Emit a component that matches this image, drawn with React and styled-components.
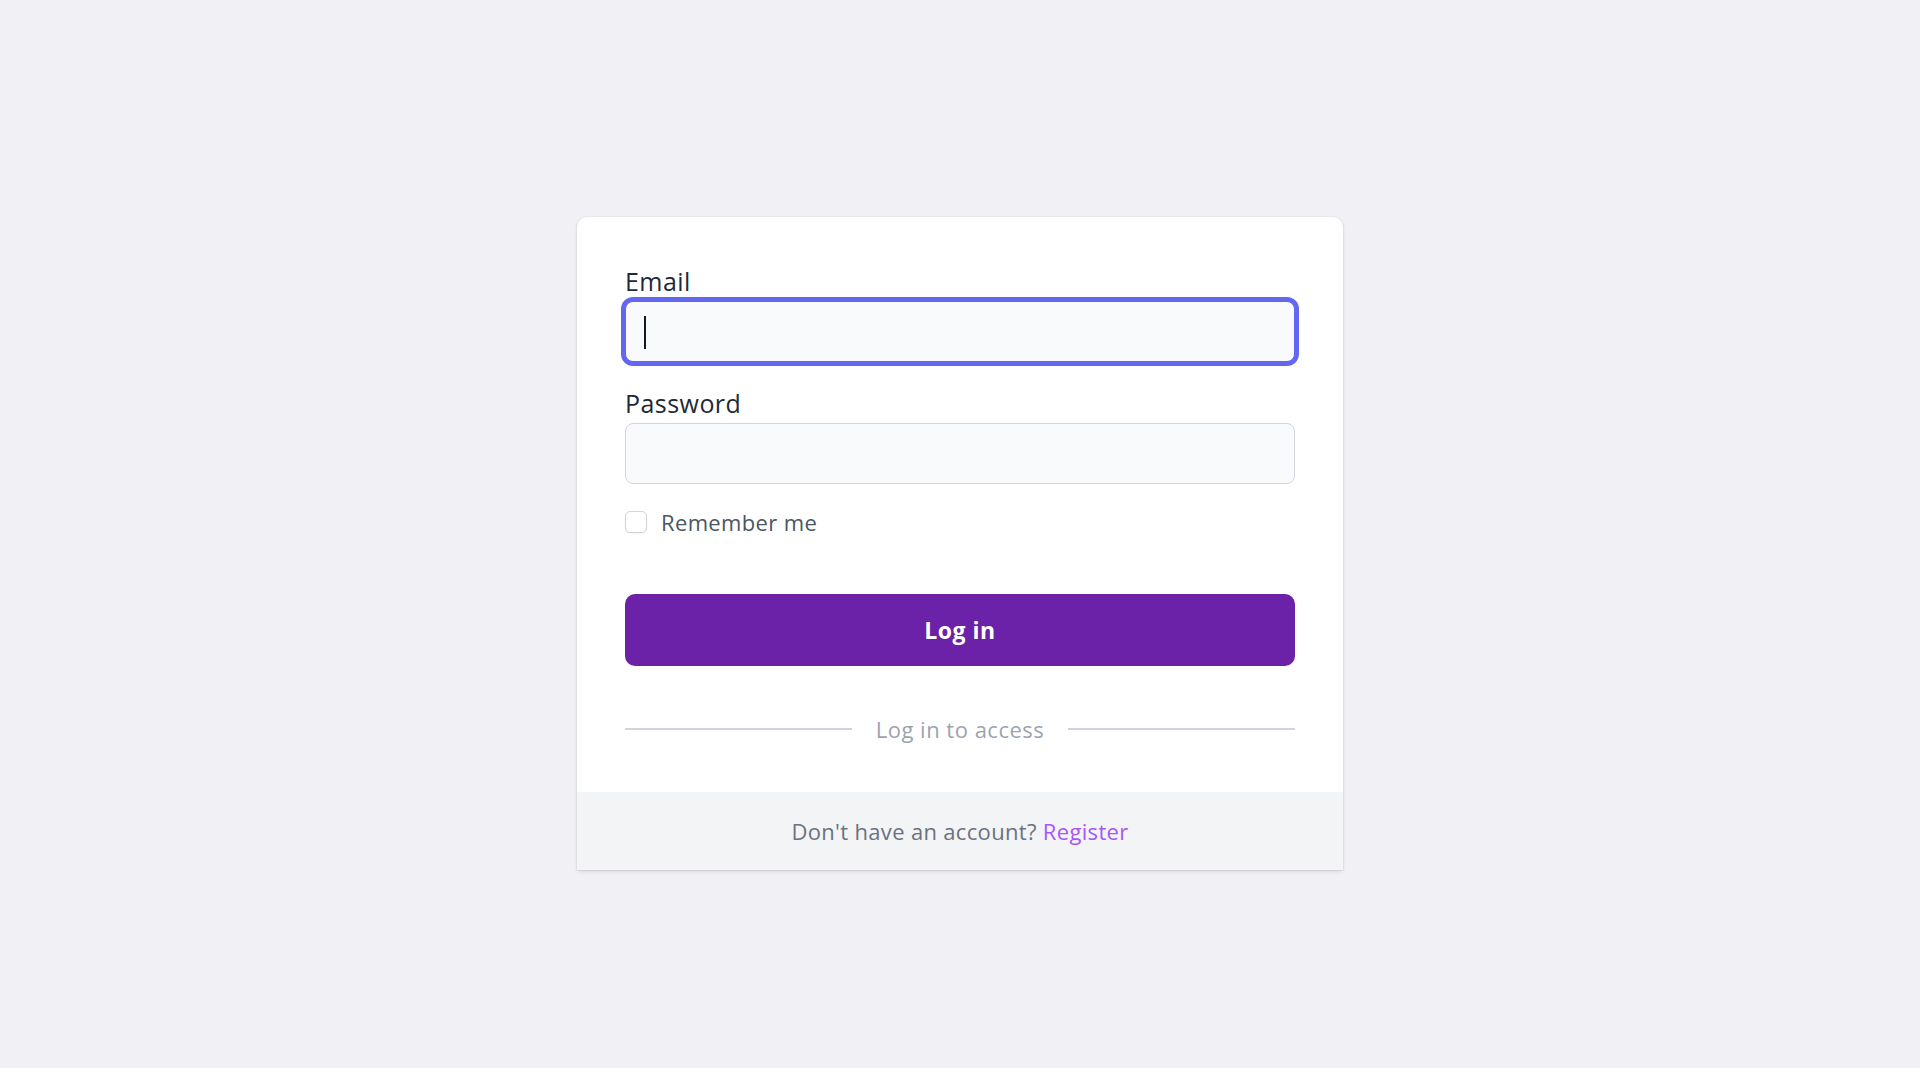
import React from "react";
import styled, { createGlobalStyle } from "styled-components";

const GlobalStyle = createGlobalStyle`
  * { box-sizing: border-box; }
  html, body {
    margin: 0;
    padding: 0;
    background: #f0f0f5;
    font-family: "Open Sans", "Noto Sans", sans-serif;
  }
`;

const Page = styled.main`
  min-height: 1068px;
  display: flex;
  flex-direction: column;
  align-items: center;
  padding-top: 217px;
`;

const Card = styled.div`
  width: 766px;
  background: #ffffff;
  border-radius: 10px 10px 0 0;
  box-shadow: 0 0 0 1px rgba(17, 24, 39, 0.035), 0 2px 5px -1px rgba(0, 0, 0, 0.12),
    0 1px 3px -1px rgba(0, 0, 0, 0.08);
`;

const Body = styled.form`
  padding: 48px;
  display: flex;
  flex-direction: column;
`;

const Field = styled.div`
  display: flex;
  flex-direction: column;
  margin-top: ${(p) => p.$gap || 0}px;
`;

const Label = styled.label`
  font-size: 25px;
  line-height: 32px;
  font-weight: 500;
  letter-spacing: 0.45px;
  color: #1f2937;
  margin-bottom: 4px;
`;

const InputWrap = styled.div`
  position: relative;
`;

const Input = styled.input`
  display: block;
  width: 100%;
  height: 61px;
  padding: 0 18px;
  font-family: inherit;
  font-size: 22px;
  color: #111827;
  background: #f9fafb;
  border: 1px solid ${(p) => (p.$focused ? "#6366f1" : "#d1d5db")};
  border-radius: 8px;
  outline: none;
  caret-color: transparent;
  box-shadow: ${(p) => (p.$focused ? "0 0 0 4px #6366f1" : "none")};
`;

const Caret = styled.span`
  position: absolute;
  left: 19px;
  top: 15px;
  width: 2px;
  height: 33px;
  background: #111827;
  pointer-events: none;
`;

const CheckRow = styled.label`
  margin-top: 23px;
  height: 30px;
  display: flex;
  align-items: center;
  gap: 14px;
  font-size: 22px;
  line-height: 30px;
  letter-spacing: 0.35px;
  color: #4b5563;
  cursor: pointer;
`;

const Box = styled.span`
  width: 22px;
  height: 22px;
  border: 1px solid #d1d5db;
  border-radius: 5px;
  background: #ffffff;
  box-shadow: 0 1px 2px rgba(0, 0, 0, 0.05);
  flex: none;
`;

const Button = styled.button`
  margin-top: 57px;
  height: 72px;
  width: 100%;
  border: none;
  border-radius: 10px;
  background: #6b21a8;
  color: #ffffff;
  font-family: inherit;
  font-size: 23px;
  font-weight: 700;
  letter-spacing: 0.5px;
  cursor: pointer;
`;

const Divider = styled.div`
  margin-top: 48px;
  height: 30px;
  display: flex;
  align-items: center;
`;

const Line = styled.span`
  flex: 1;
  height: 2px;
  background: #d1d5db;
`;

const DividerText = styled.span`
  padding: 0 24px;
  font-size: 22px;
  line-height: 30px;
  letter-spacing: 0.5px;
  color: #9ca3af;
`;

const Footer = styled.div`
  background: #f3f4f6;
  padding: 24px 0;
  text-align: center;
  font-size: 22px;
  line-height: 30px;
  letter-spacing: 0.33px;
  color: #6b7280;
`;

const Link = styled.a`
  color: #a855f7;
  text-decoration: none;
`;

export default function App() {
  return (
    <>
      <GlobalStyle />
      <Page>
        <Card>
          <Body onSubmit={(e) => e.preventDefault()}>
            <Field>
              <Label htmlFor="email">Email</Label>
              <InputWrap>
                <Input id="email" type="email" $focused />
                <Caret />
              </InputWrap>
            </Field>
            <Field $gap={25}>
              <Label htmlFor="password">Password</Label>
              <Input id="password" type="password" />
            </Field>
            <CheckRow>
              <Box />
              Remember me
            </CheckRow>
            <Button type="submit">Log in</Button>
            <Divider>
              <Line />
              <DividerText>Log in to access</DividerText>
              <Line />
            </Divider>
          </Body>
          <Footer>
            Don't have an account? <Link href="#">Register</Link>
          </Footer>
        </Card>
      </Page>
    </>
  );
}
